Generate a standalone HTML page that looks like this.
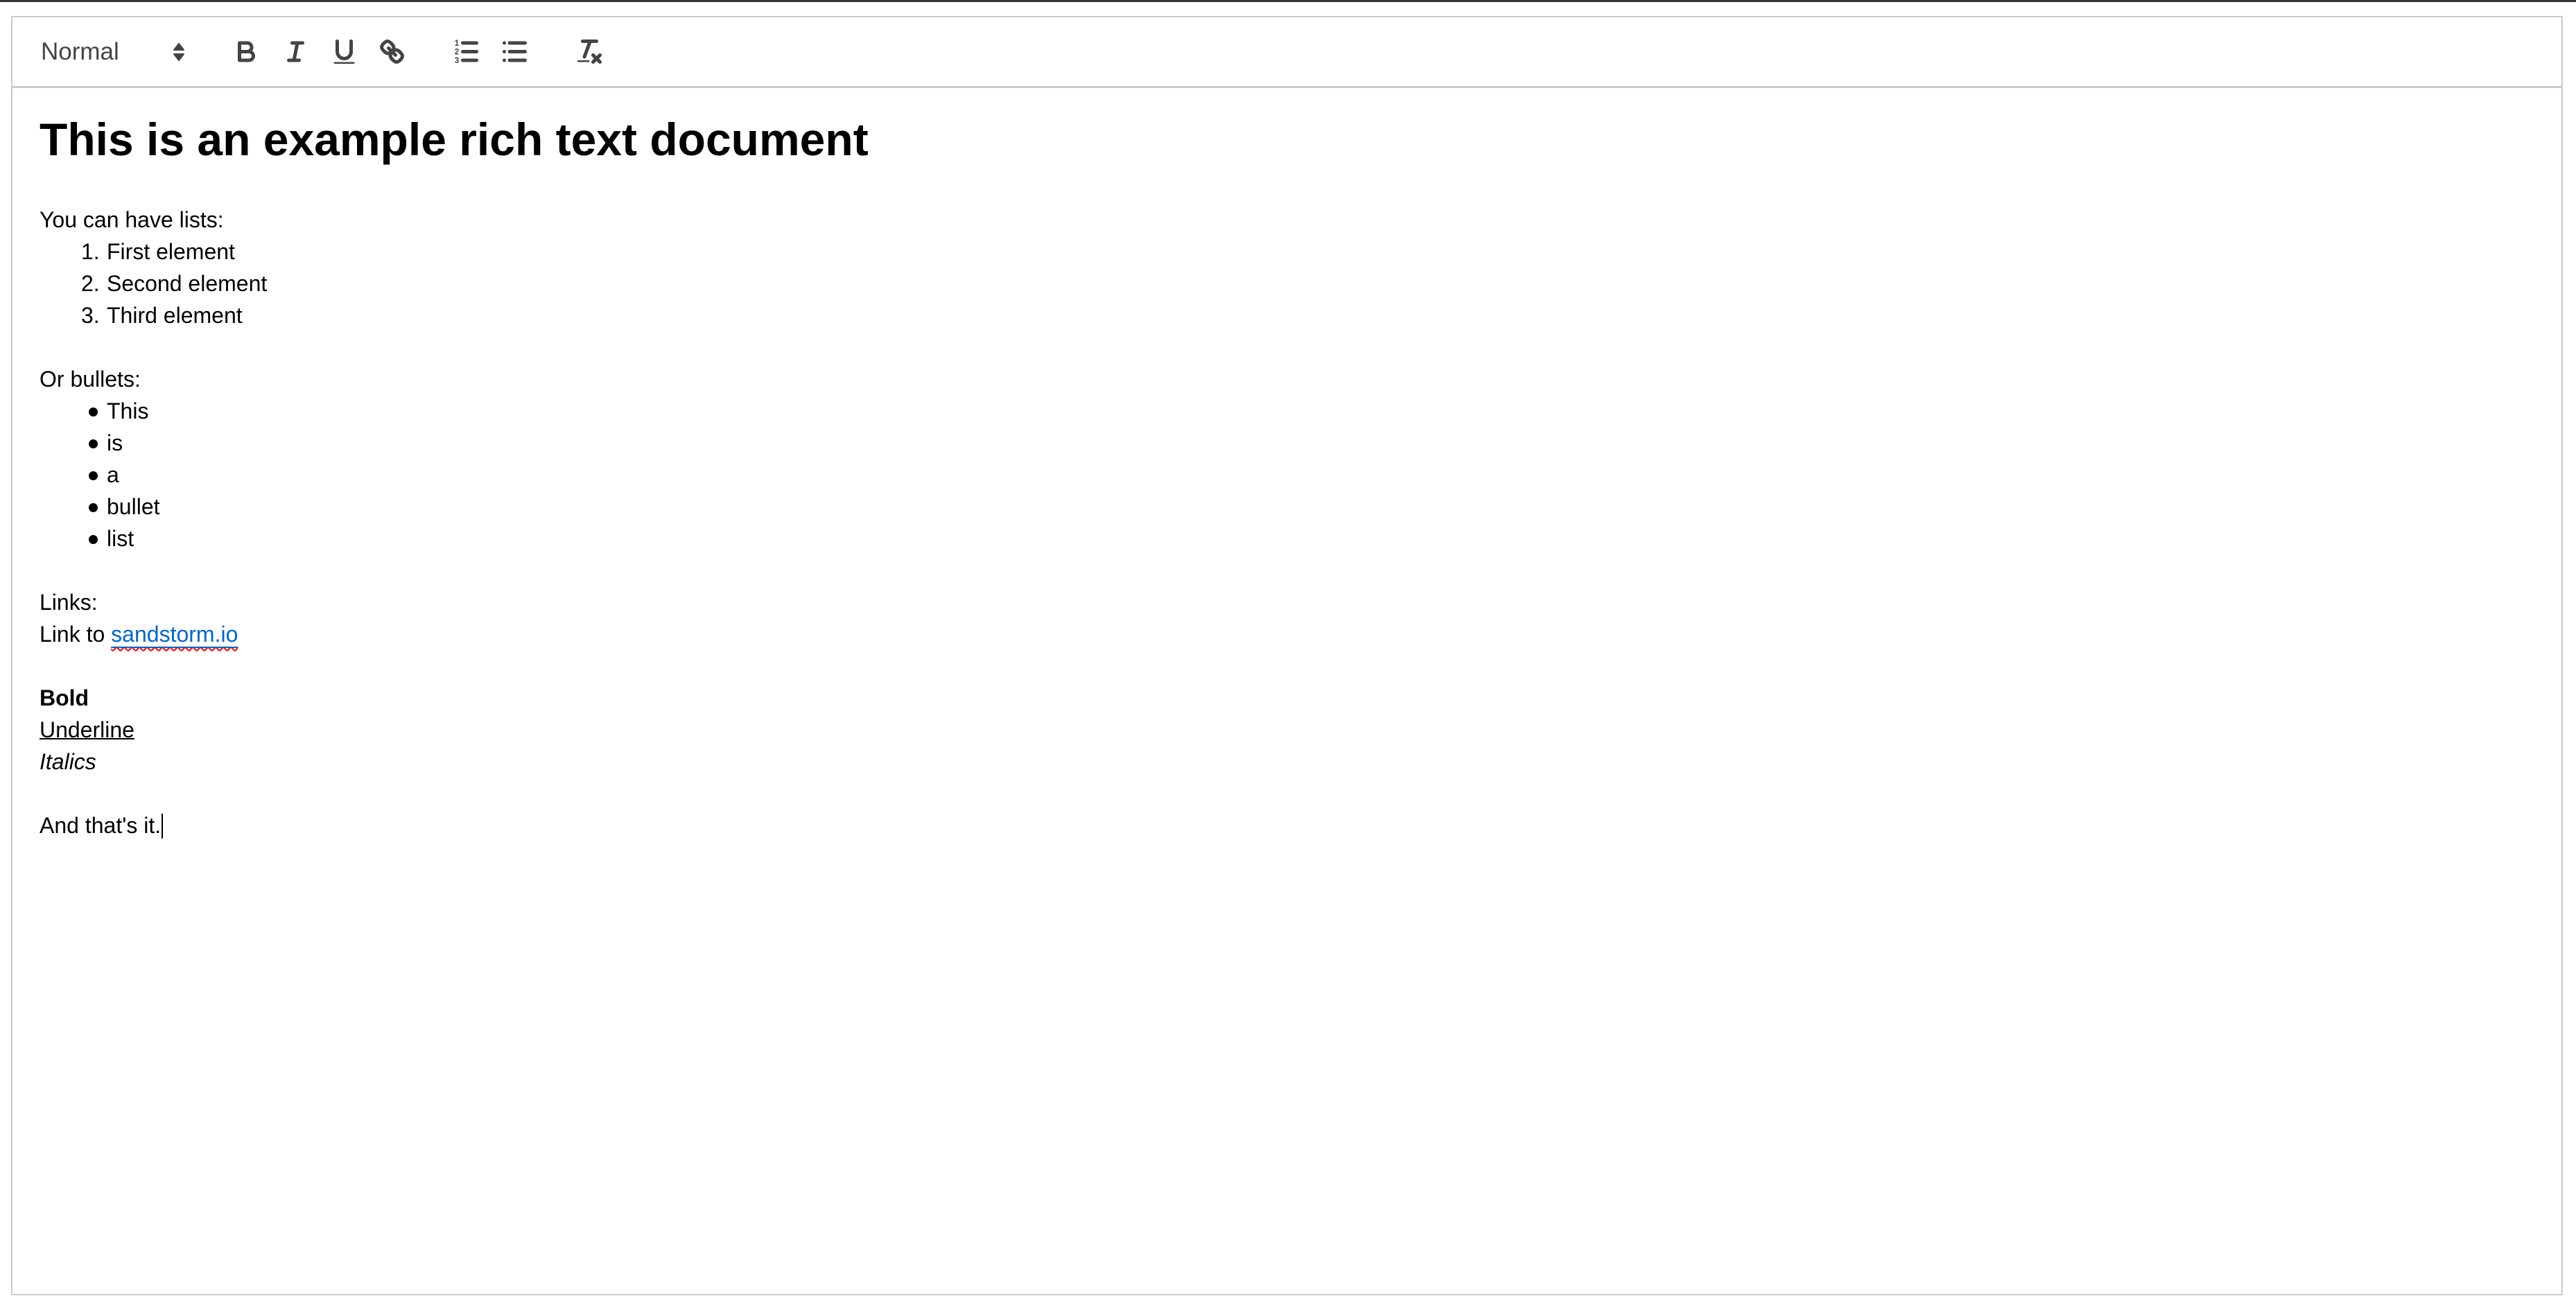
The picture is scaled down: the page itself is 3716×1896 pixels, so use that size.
<!DOCTYPE html>
<html><head><meta charset="utf-8">
<style>
html,body{margin:0;padding:0;background:#fff;width:3716px;height:1896px;overflow:hidden;font-family:"Liberation Sans",Arial,sans-serif;}
#topline{position:absolute;left:0;top:0;width:3716px;height:3px;background:#333;}
#box{position:absolute;left:16px;top:23px;width:3677px;height:1842px;border:2px solid #ccc;}
#tbline{position:absolute;left:16px;top:124px;width:3681px;height:3px;background:#ccc;}
.ic{position:absolute;width:45px;height:45px;top:52px;}
.ic *{fill:none;stroke:#444;stroke-width:2;stroke-linecap:round;stroke-linejoin:round;}
.ic .f{fill:#444;stroke:none;}
#normal{position:absolute;left:59px;top:55px;font-size:35px;line-height:40px;color:#444;}
#h1{position:absolute;left:57px;top:157px;font-size:66px;line-height:88px;font-weight:bold;white-space:nowrap;color:#000;}
#body{position:absolute;left:57px;top:294px;font-size:32px;line-height:46px;color:#000;white-space:nowrap;}
.l{height:46px;position:relative;}
.num{position:absolute;left:60px;}
.ind{position:absolute;left:97px;}
.dot{position:absolute;left:71px;top:18px;width:13px;height:13px;border-radius:50%;background:#000;}
.sp{text-decoration:underline wavy red;text-decoration-thickness:2px;text-underline-offset:7px;}
a{color:#06c;text-decoration:underline;text-decoration-color:#06c;text-decoration-thickness:2px;}
.caret{display:inline-block;width:2px;height:36px;background:#000;vertical-align:-8px;margin-left:1px;}
</style></head><body>
<div id="topline"></div>
<div id="box"></div>
<div id="tbline"></div>
<div id="normal">Normal</div>
<svg style="position:absolute;left:248px;top:60px" width="20" height="30" viewBox="0 0 20 30"><polygon points="3,12 10,3 17,12" fill="#444" stroke="#444" stroke-width="2" stroke-linejoin="round"/><polygon points="3,18 10,27 17,18" fill="#444" stroke="#444" stroke-width="2" stroke-linejoin="round"/></svg>
<svg class="ic" style="left:333px" viewBox="0 0 18 18"><path d="M5,4H9.5A2.5,2.5,0,0,1,12,6.5v0A2.5,2.5,0,0,1,9.5,9H5V4Z"/><path d="M5,9h5.5A2.5,2.5,0,0,1,13,11.5v0A2.5,2.5,0,0,1,10.5,14H5V9Z"/></svg>
<svg class="ic" style="left:404px" viewBox="0 0 18 18"><line x1="7" x2="13" y1="4" y2="4"/><line x1="5" x2="11" y1="14" y2="14"/><line x1="8" x2="10" y1="14" y2="4"/></svg>
<svg class="ic" style="left:474px" viewBox="0 0 18 18"><path d="M5,3V9a4.012,4.012,0,0,0,4,4H9a4.012,4.012,0,0,0,4-4V3"/><rect class="f" height="1" rx=".5" ry=".5" width="12" x="3" y="15"/></svg>
<svg class="ic" style="left:543px" viewBox="0 0 18 18"><line x1="7" x2="11" y1="7" y2="11"/><path d="M8.9,4.577a3.476,3.476,0,0,1,.36,4.679A3.476,3.476,0,0,1,4.577,8.9C3.185,7.5,2.035,6.4,4.217,4.217S7.5,3.185,8.9,4.577Z"/><path d="M13.423,9.1a3.476,3.476,0,0,0-4.679-.36,3.476,3.476,0,0,0,.36,4.679c1.392,1.392,2.5,2.542,4.679.36S14.815,10.5,13.423,9.1Z"/></svg>
<svg class="ic" style="left:650px" viewBox="0 0 18 18"><line x1="7" x2="15" y1="4" y2="4"/><line x1="7" x2="15" y1="9" y2="9"/><line x1="7" x2="15" y1="14" y2="14"/><text class="f" x="2.3" y="5.6" font-size="4.6" font-weight="bold" font-family="Liberation Sans">1</text><text class="f" x="2.3" y="10.6" font-size="4.6" font-weight="bold" font-family="Liberation Sans">2</text><text class="f" x="2.3" y="15.6" font-size="4.6" font-weight="bold" font-family="Liberation Sans">3</text></svg>
<svg class="ic" style="left:720px" viewBox="0 0 18 18"><line x1="6" x2="15" y1="4" y2="4"/><line x1="6" x2="15" y1="9" y2="9"/><line x1="6" x2="15" y1="14" y2="14"/><line x1="3" x2="3" y1="4" y2="4"/><line x1="3" x2="3" y1="9" y2="9"/><line x1="3" x2="3" y1="14" y2="14"/></svg>
<svg class="ic" style="left:828px" viewBox="0 0 18 18"><line x1="5" x2="13" y1="3" y2="3"/><line x1="6" x2="9.35" y1="12" y2="3"/><line x1="11" x2="15" y1="11" y2="15"/><line x1="15" x2="11" y1="11" y2="15"/><rect class="f" height="1" rx=".5" ry=".5" width="7" x="2" y="14"/></svg>

<div id="h1">This is an example rich text document</div>
<div id="body">
<div class="l">You can have lists:</div>
<div class="l"><span class="num">1.</span><span class="ind">First element</span></div>
<div class="l"><span class="num">2.</span><span class="ind">Second element</span></div>
<div class="l"><span class="num">3.</span><span class="ind">Third element</span></div>
<div class="l"></div>
<div class="l">Or bullets:</div>
<div class="l"><span class="dot"></span><span class="ind">This</span></div>
<div class="l"><span class="dot"></span><span class="ind">is</span></div>
<div class="l"><span class="dot"></span><span class="ind">a</span></div>
<div class="l"><span class="dot"></span><span class="ind">bullet</span></div>
<div class="l"><span class="dot"></span><span class="ind">list</span></div>
<div class="l"></div>
<div class="l">Links:</div>
<div class="l">Link to <span class="sp"><a>sandstorm.io</a></span></div>
<div class="l"></div>
<div class="l"><b>Bold</b></div>
<div class="l"><u style="text-decoration-thickness:2px">Underline</u></div>
<div class="l"><i>Italics</i></div>
<div class="l"></div>
<div class="l">And that's it.<span class="caret"></span></div>
</div>
</body></html>
